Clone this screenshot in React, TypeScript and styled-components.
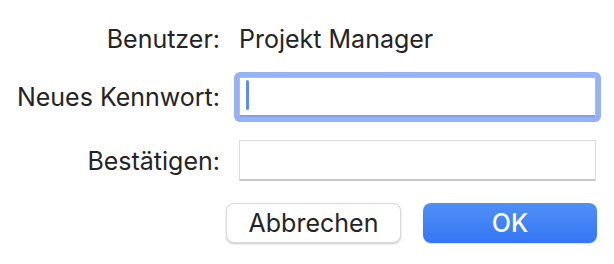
import React from 'react'
import styled, { createGlobalStyle, css } from 'styled-components'

const Global = createGlobalStyle`
  html, body {
    margin: 0;
    padding: 0;
    background: #fff;
  }
  body {
    font-family: Inter, "Liberation Sans", Arial, sans-serif;
    color: #242424;
    -webkit-font-smoothing: antialiased;
  }
`

const Sheet = styled.div`
  width: 614px;
  height: 264px;
  box-sizing: border-box;
  padding-top: 24px;
  background: #fff;
  overflow: hidden;
`

const Form = styled.div`
  display: grid;
  grid-template-columns: 220px 357px;
  grid-template-rows: 30px 40px 41px;
  column-gap: 19px;
  row-gap: 23px;
  align-items: center;
`

const Label = styled.div`
  text-align: right;
  font-size: 25px;
  line-height: 30px;
  white-space: nowrap;
`

const Value = styled.div`
  font-size: 25px;
  line-height: 30px;
  white-space: nowrap;
`

const Field = styled.div<{ focused?: boolean }>(
  props => css`
    position: relative;
    height: 100%;
    box-sizing: border-box;
    background: #fff;
    border: 1px solid #dcdcdc;
    border-bottom: 2px solid #c8c8c8;
    border-radius: 1px;

    ${props.focused &&
    css`
      border: 1px solid #a6bdf4;
      border-bottom: 2px solid #7f9fec;
      border-radius: 2px;
      box-shadow: 0 0 0 5px #97b2f4;
    `}
  `
)

const Caret = styled.span`
  position: absolute;
  left: 6px;
  top: 2px;
  width: 3px;
  height: 30px;
  border-radius: 2px;
  background: #5c8df3;
`

const Buttons = styled.div`
  display: flex;
  justify-content: flex-end;
  gap: 22px;
  padding-right: 17px;
  margin-top: 22px;
`

const Button = styled.button<{ primary?: boolean }>(
  props => css`
    width: 175px;
    height: 40px;
    box-sizing: border-box;
    border-radius: 8px;
    font-family: inherit;
    font-size: 25px;
    padding: 0;
    cursor: pointer;
    background: #fff;
    color: #242424;
    border: 1px solid #dadada;
    box-shadow: 0 1px 2px rgba(0, 0, 0, 0.22);

    ${props.primary &&
    css`
      width: 174px;
      color: #fff;
      font-weight: 500;
      border: none;
      background: linear-gradient(to bottom, #4f8ff7, #3576f5);
      box-shadow: 0 1px 1px rgba(0, 0, 0, 0.12);
    `}
  `
)

export default function App() {
  return (
    <>
      <Global />
      <Sheet>
        <Form>
          <Label>Benutzer:</Label>
          <Value>Projekt Manager</Value>
          <Label>Neues Kennwort:</Label>
          <Field focused>
            <Caret />
          </Field>
          <Label>Bestätigen:</Label>
          <Field />
        </Form>
        <Buttons>
          <Button>Abbrechen</Button>
          <Button primary>OK</Button>
        </Buttons>
      </Sheet>
    </>
  )
}
